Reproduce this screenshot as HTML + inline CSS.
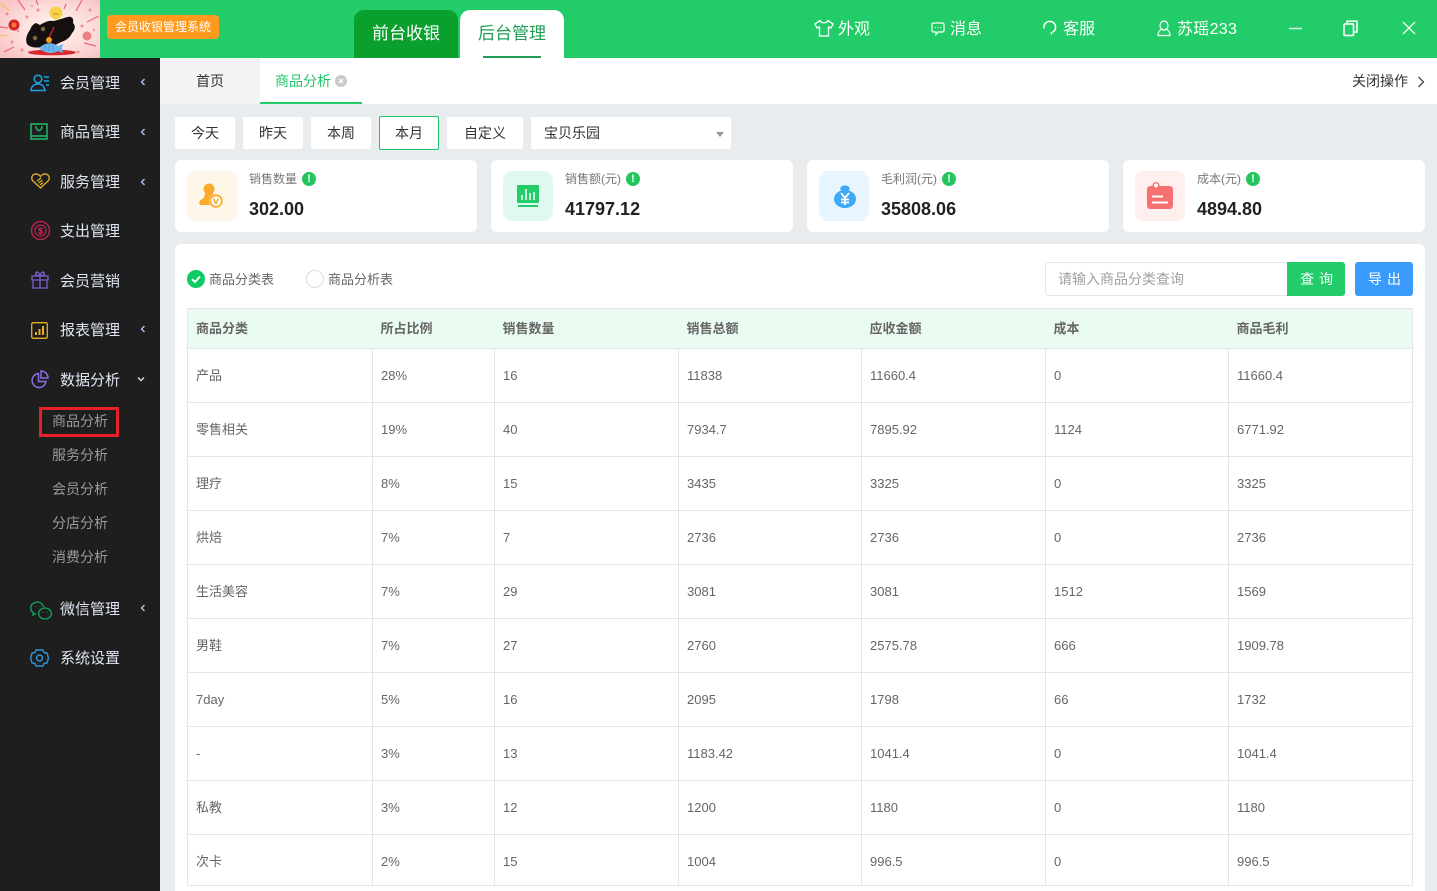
<!DOCTYPE html>
<html lang="zh"><head><meta charset="utf-8"><title>商品分析</title>
<style>
*{box-sizing:border-box;margin:0;padding:0}
html,body{width:1437px;height:891px;overflow:hidden}
body{position:relative;background:#e8ecef;font-family:"Liberation Sans","Noto Sans CJK SC",sans-serif;color:#333}
.a{position:absolute;white-space:nowrap}
svg{position:absolute;overflow:visible}
.top{left:0;top:0;width:1437px;height:58px;background:#22cc68}
.side{left:0;top:58px;width:160px;height:833px;background:#1e1e1e}
.m{left:60px;font-size:15px;line-height:22px;color:#dfe6f2}
.s{left:52px;font-size:14px;line-height:20px;color:#9a9a9a}
.c{left:139px;width:8px;height:8px}
.w{font-size:16px;line-height:22px;color:#fff}
.b{top:117px;height:32px;background:#fff;border-radius:2px;font-size:14px;line-height:32px;text-align:center;color:#333}
.card{top:160px;width:302px;height:72px;background:#fff;border-radius:6px}
.ic{left:12px;top:11px;width:50px;height:50px;border-radius:9px}
.l{left:74px;top:10px;font-size:12px;line-height:18px;color:#777}
.v{left:74px;top:37px;font-size:18px;font-weight:bold;line-height:24px;color:#222}
.ok{top:12px;width:14px;height:14px;border-radius:50%;background:#22c55e;color:#fff;font-size:11px;font-weight:bold;line-height:14px;text-align:center}
table{position:absolute;left:187px;top:308px;width:1225px;border-collapse:collapse;table-layout:fixed;font-size:13px;color:#666}
td,th{border:1px solid #e6e6e6;padding:0 8px;text-align:left;height:54px;white-space:nowrap;font-weight:normal}
th{height:40px;background:#eafbf1;font-weight:bold;font-size:13px;color:#666;padding-bottom:2px}
tr.h th{border-left:0;border-right:0}
tr.h th:first-child{border-left:1px solid #e6e6e6}
tr.h th:last-child{border-right:1px solid #e6e6e6}
tr.z td:first-child{padding-bottom:2px}
tr.last td{height:51px;padding-top:2px}
tr.last td:first-child{padding-top:0;padding-bottom:0}
</style></head><body>
<div class="a top"></div>
<svg style="left:0;top:0;overflow:hidden" width="100" height="58" viewBox="0 0 100 58">
<defs><radialGradient id="g" cx="55%" cy="50%" r="65%"><stop offset="0" stop-color="#fff4ee"/><stop offset=".6" stop-color="#fcdcda"/><stop offset="1" stop-color="#f9c4c6"/></radialGradient></defs>
<rect width="100" height="58" fill="url(#g)"/>
<g stroke="#ea6a70" stroke-width="1.200"><path d="M18 0l7 10M36 0l2 5M82 0l-6 11M99 16l-12 6M0 27l8 1M96 46l-12-3M4 52l10-5M66 4l-2 5"/></g>
<g stroke="#f0c24a" stroke-width="1"><path d="M0 3l10 8M0 36l8-1"/></g>
<g fill="#ee8f94"><circle cx="27" cy="17" r="1.500"/><circle cx="38" cy="10" r="1.500"/><circle cx="12" cy="42" r="1.500"/><circle cx="90" cy="10" r="1.500"/><circle cx="22" cy="50" r="1.500"/><circle cx="78" cy="52" r="1.500"/><circle cx="7" cy="14" r="1.500"/><circle cx="82" cy="26" r="1.500"/><circle cx="18" cy="31" r="1.200"/><circle cx="94" cy="30" r="1.200"/><circle cx="32" cy="6" r="1"/></g>
<circle cx="87" cy="36" r="4.500" fill="#ef7f83"/>
<circle cx="14" cy="25" r="5.500" fill="#d92222"/><circle cx="14" cy="25" r="2.500" fill="#f47a3c"/>
<circle cx="56" cy="21" r="8" fill="#fff" opacity=".6"/>
<circle cx="56" cy="13" r="6.500" fill="#f8d24a"/><path d="M53 14h6" stroke="#c98a1a"/>
<path d="M27 44c-2-5 0-10 3-14 1-3 3-6 6-7l4 2c5-3 9-5 13-4 6-1 10-3 15-4 4-1 6 2 5 6 3 3 2 7-1 10-2 5-7 8-11 9-5 3-10 5-17 5-7 1-14 1-17-3z" fill="#15100f"/>
<ellipse cx="52" cy="52.500" rx="24" ry="2.800" fill="#d9272e"/>
<circle cx="43" cy="29" r="2.200" fill="#7c6a3c"/><circle cx="35" cy="38" r="2.200" fill="#7c6a3c"/>
<path d="M54 27l-5 11" stroke="#c9202a" stroke-width="1.500"/>
<circle cx="49" cy="40" r="3" fill="#f39c1f"/>
<path d="M39 48c6-6 14-6 19-2l5-2-1 4 1 5-5-2c-5 3-13 3-19-3z" fill="#6cb6ee"/>
<path d="M45 46v4M49 45v6M53 45v6" stroke="#3d8fd0" stroke-width=".7"/>
</svg>
<div class="a" style="left:107px;top:15px;width:112px;height:24px;background:#ff9a1f;border-radius:4px;color:#fff;font-size:12px;line-height:24px;text-align:center">会员收银管理系统</div>
<div class="a" style="left:354px;top:10px;width:104px;height:48px;background:#0aa02d;border-radius:10px 10px 0 0;color:#fff;font-size:17px;line-height:48px;text-align:center">前台收银</div>
<div class="a" style="left:460px;top:10px;width:104px;height:48px;background:#fff;border-radius:10px 10px 0 0;color:#1f9d55;font-size:17px;line-height:48px;text-align:center">后台管理</div>
<div class="a" style="left:483px;top:56px;width:58px;height:2px;background:#1f9d55"></div>

<svg style="left:814px;top:19px" width="20" height="18" fill="none" stroke="#fff" stroke-width="1.300"><path d="M6 1.500L1 5l2 4 2.500-1v9h9V8L17 9l2-4-5-3.500c-1 3-7 3-8 0z"/></svg>
<div class="a w" style="left:838px;top:19px">外观</div>
<svg style="left:931px;top:22px" width="14" height="14" fill="none" stroke="#fff" stroke-width="1.200"><path d="M2.500 1h9A1.500 1.500 0 0 1 13 2.500v6A1.500 1.500 0 0 1 11.500 10H7l-2 2.500V10H2.500A1.500 1.500 0 0 1 1 8.500v-6A1.500 1.500 0 0 1 2.500 1z"/><path d="M4 5.500h.8M6.600 5.500h.8M9.200 5.500h.8"/></svg>
<div class="a w" style="left:950px;top:19px">消息</div>
<svg style="left:1042px;top:20px" width="16" height="16" fill="none" stroke="#fff" stroke-width="1.500"><path d="M2 8.500C1 3 6 1 9 1.500c3 .5 5 3.500 4.500 6.500-.3 2-1.500 3.500-3 4"/><path d="M9.500 12v2.500"/></svg>
<div class="a w" style="left:1063px;top:19px">客服</div>
<svg style="left:1157px;top:20px" width="14" height="16" fill="none" stroke="#fff" stroke-width="1.200"><ellipse cx="7" cy="5.500" rx="4" ry="4.500"/><path d="M4.500 9.500C2 10.500 1 12 1 15.500h12c0-3.500-1-5-3.500-6"/></svg>
<div class="a w" style="left:1177px;top:19px;letter-spacing:.3px">苏瑶233</div>
<svg style="left:1289px;top:22px" width="14" height="14" stroke="#d8f7e3" stroke-width="1.500"><path d="M0 6.500h13"/></svg>
<svg style="left:1343px;top:20px" width="16" height="17" fill="none" stroke="#e8fbef" stroke-width="1.700"><rect x="1" y="4" width="9.500" height="11.500" rx="1"/><path d="M4 3.500V1.200h10v10.800h-3.500"/></svg>
<svg style="left:1402px;top:21px" width="14" height="14" stroke="#e8fbef" stroke-width="1.400"><path d="M1 1l12 12M13 1L1 13"/></svg>

<div class="a side"></div>
<svg style="left:30px;top:74px" width="20" height="18" fill="none" stroke="#1aa5e8" stroke-width="1.500"><circle cx="8" cy="5" r="3.800"/><path d="M1 16.500c0-4 3-6.500 7-6.500s6 2 7 6.500z"/><path d="M14 3h5M14 7h5M16 11h3"/></svg>
<div class="a m" style="top:73px">会员管理</div>
<svg class="a c" style="top:78px" viewBox="0 0 8 8" fill="none" stroke="#a9c4f0" stroke-width="1.400"><path d="M5.500 1L2.500 4l3 3"/></svg>
<svg style="left:30px;top:123px" width="18" height="17" fill="none" stroke="#1fc06f" stroke-width="1.400"><path d="M1 1h16v12H1zM1 13v3h16v-3"/><path d="M6 3c0 6 6 6 6 0"/></svg>
<div class="a m" style="top:122px">商品管理</div>
<svg class="a c" style="top:128px" viewBox="0 0 8 8" fill="none" stroke="#a9c4f0" stroke-width="1.400"><path d="M5.500 1L2.500 4l3 3"/></svg>
<svg style="left:31px;top:173px" width="19" height="16" fill="none" stroke="#d9a62c" stroke-width="1.400"><path d="M9.500 15L1.500 7.500C-.5 4 2 1 5 1c2 0 3.500 1 4.500 2.500C10.500 2 12 1 14 1c3 0 5.500 3 3.500 6.500z"/><path d="M6 8l4-3M7.500 10l4-3M9 12l3-2.500"/></svg>
<div class="a m" style="top:172px">服务管理</div>
<svg class="a c" style="top:178px" viewBox="0 0 8 8" fill="none" stroke="#a9c4f0" stroke-width="1.400"><path d="M5.500 1L2.500 4l3 3"/></svg>
<svg style="left:30px;top:220px" width="21" height="21" fill="none"><circle cx="10.500" cy="10.500" r="9" stroke="#b8234f" stroke-width="1.500"/><circle cx="10.500" cy="10.500" r="5.500" stroke="#b8234f" stroke-width="1.200"/><text x="10.500" y="14" font-size="9" font-weight="bold" text-anchor="middle" fill="#e0285f">$</text></svg>
<div class="a m" style="top:221px">支出管理</div>
<svg style="left:31px;top:271px" width="18" height="18" fill="none" stroke="#7d5fd0" stroke-width="1.300"><path d="M1 5h16v4H1zM2 9h14v8H2zM9 5v12M9 5C6 5 4 3.500 5 1.500 6.500 0 8.500 2.500 9 5zM9 5c3 0 5-1.500 4-3.500C11.500 0 9.500 2.500 9 5z"/></svg>
<div class="a m" style="top:271px">会员营销</div>
<svg style="left:31px;top:322px" width="17" height="17" fill="none" stroke="#e7ad22" stroke-width="1.300"><rect x=".7" y=".7" width="15.600" height="15.600" rx="1.500"/><path d="M5 13v-3M8.500 13V7M12 13V4" stroke-width="2"/></svg>
<div class="a m" style="top:320px">报表管理</div>
<svg class="a c" style="top:325px" viewBox="0 0 8 8" fill="none" stroke="#a9c4f0" stroke-width="1.400"><path d="M5.500 1L2.500 4l3 3"/></svg>
<svg style="left:31px;top:370px" width="18" height="18" fill="none" stroke="#8a6fe0" stroke-width="1.500"><path d="M7.500 3.500a7 7 0 1 0 7.500 8H7.500z"/><path d="M10 1a7 7 0 0 1 7 7h-7z"/></svg>
<div class="a m" style="top:370px">数据分析</div>
<svg class="a c" style="left:137px;top:375px" viewBox="0 0 8 8" fill="none" stroke="#d6dce6" stroke-width="1.400"><path d="M1 2.500l3 3 3-3"/></svg>
<div class="a" style="left:39px;top:407px;width:80px;height:30px;border:3px solid #e8202a"></div>
<div class="a s" style="top:411px">商品分析</div>
<div class="a s" style="top:445px">服务分析</div>
<div class="a s" style="top:479px">会员分析</div>
<div class="a s" style="top:513px">分店分析</div>
<div class="a s" style="top:547px">消费分析</div>
<svg style="left:30px;top:601px" width="22" height="19" fill="none" stroke="#0fa958" stroke-width="1.300"><path d="M8 1C4 1 .7 3.500.7 7c0 2 1 3.500 2.500 4.500L3 14l3-1.500"/><path d="M14 6C12 2.500 10 1 8 1"/><ellipse cx="15" cy="12.500" rx="6.300" ry="5.500"/><path d="M13 11v.5M17 11v.5M5.500 5v.5M10 5v.5" stroke-width="1.500"/></svg>
<div class="a m" style="top:599px">微信管理</div>
<svg class="a c" style="top:604px" viewBox="0 0 8 8" fill="none" stroke="#a9c4f0" stroke-width="1.400"><path d="M5.500 1L2.500 4l3 3"/></svg>
<svg style="left:30px;top:649px" width="19" height="18" fill="none" stroke="#2f94d8" stroke-width="1.400"><path d="M6 1h7l1 2.500 3 .5 1.500 5-1.500 5-3 .5-1 2.500H6l-1-2.500-3-.5L.7 9 2 4l3-.5z" stroke-linejoin="round"/><circle cx="9.500" cy="9" r="3"/></svg>
<div class="a m" style="top:648px">系统设置</div>

<div class="a" style="left:160px;top:58px;width:1277px;height:46px;background:#fff"></div>
<div class="a" style="left:160px;top:58px;width:100px;height:46px;background:#f3f3f3;font-size:14px;line-height:46px;text-align:center;color:#333">首页</div>
<div class="a" style="left:275px;top:58px;font-size:14px;line-height:46px;color:#22c46a">商品分析</div>
<svg style="left:335px;top:75px" width="12" height="12"><circle cx="6" cy="6" r="6" fill="#c9c9c9"/><path d="M4 4l4 4M8 4l-4 4" stroke="#fff" stroke-width="1.300"/></svg>
<div class="a" style="left:260px;top:102px;width:102px;height:2px;background:#22cc68"></div>
<div class="a" style="left:1352px;top:70px;font-size:14px;line-height:22px;color:#333">关闭操作</div>
<svg style="left:1417px;top:76px" width="8" height="12" fill="none" stroke="#444" stroke-width="1.300"><path d="M1.500 1l5 5-5 5"/></svg>

<div class="a b" style="left:175px;width:60px">今天</div>
<div class="a b" style="left:243px;width:60px">昨天</div>
<div class="a b" style="left:311px;width:60px">本周</div>
<div class="a b" style="left:379px;top:116px;height:34px;width:60px;border:1px solid #22c46a;line-height:32px">本月</div>
<div class="a b" style="left:447px;width:76px">自定义</div>
<div class="a b" style="left:531px;width:200px;text-align:left;padding-left:13px">宝贝乐园</div>
<svg style="left:716px;top:132px" width="8" height="6"><path d="M0 0h8L4 5z" fill="#999"/></svg>

<div class="a card" style="left:175px">
<div class="a ic" style="background:#fff6ea"></div>
<svg style="left:24px;top:23px" width="26" height="26"><circle cx="10" cy="6" r="5.500" fill="#fbab2c"/><path d="M6 10h8l1 5c-2 2-3 4-2.500 7H1c-1-2-1-4 2-6 2-1 3-3 3-6z" fill="#fbab2c"/><circle cx="17" cy="18" r="7" fill="#fff"/><circle cx="17" cy="18" r="5.800" fill="none" stroke="#fbab2c" stroke-width="1.800"/><path d="M14.500 15.500l2.500 5 2.500-5" fill="none" stroke="#fbab2c" stroke-width="1.600"/></svg>
<div class="a l">销售数量</div><div class="a ok" style="left:127px">!</div><div class="a v">302.00</div></div>
<div class="a card" style="left:491px">
<div class="a ic" style="background:#e0f8ef"></div>
<svg style="left:26px;top:25px" width="24" height="24"><rect width="22" height="18" y="0" fill="#22cc68" rx="1"/><path d="M5 15v-5M9 15V4M13 15V8M17 15V7" stroke="#fff" stroke-width="1.500"/><rect x="1" y="20" width="20" height="2" fill="#22cc68"/></svg>
<div class="a l">销售额(元)</div><div class="a ok" style="left:135px">!</div><div class="a v">41797.12</div></div>
<div class="a card" style="left:807px">
<div class="a ic" style="background:#e6f5ff"></div>
<svg style="left:26px;top:24px" width="24" height="24"><path d="M8 3c1-2 7-2 8 0l1 2-2 2h-6L7 5z" fill="#3fa9f5"/><ellipse cx="12" cy="15" rx="11" ry="9" fill="#3fa9f5"/><path d="M8 9l4 5 4-5M12 14v7M8 15.500h8M8 18.500h8" fill="none" stroke="#fff" stroke-width="1.800"/></svg>
<div class="a l">毛利润(元)</div><div class="a ok" style="left:135px">!</div><div class="a v">35808.06</div></div>
<div class="a card" style="left:1123px">
<div class="a ic" style="background:#ffefef"></div>
<svg style="left:24px;top:22px" width="28" height="28"><rect x="0" y="4" width="26" height="23" rx="3" fill="#f87171"/><circle cx="9" cy="3.500" r="2.800" fill="#fff" stroke="#f87171" stroke-width="1.500"/><path d="M5 14.500h11M5 20.500h16" stroke="#fff" stroke-width="2"/></svg>
<div class="a l">成本(元)</div><div class="a ok" style="left:123px">!</div><div class="a v">4894.80</div></div>

<div class="a" style="left:175px;top:244px;width:1250px;height:660px;background:#fff;border-radius:6px"></div>
<svg style="left:187px;top:270px" width="18" height="18"><circle cx="9" cy="9" r="9" fill="#0ccb62"/><path d="M5 9.200l3 2.800 5-5.500" fill="none" stroke="#fff" stroke-width="2"/></svg>
<div class="a" style="left:209px;top:270px;font-size:13px;line-height:20px;color:#666">商品分类表</div>
<svg style="left:306px;top:270px" width="18" height="18"><circle cx="9" cy="9" r="8.500" fill="#fff" stroke="#ddd"/></svg>
<div class="a" style="left:328px;top:270px;font-size:13px;line-height:20px;color:#666">商品分析表</div>
<div class="a" style="left:1045px;top:262px;width:243px;height:34px;background:#fff;border:1px solid #e3e6e8;border-radius:3px 0 0 3px;padding-left:12px;font-size:14px;line-height:32px;color:#a0a0a0">请输入商品分类查询</div>
<div class="a" style="left:1287px;top:262px;width:58px;height:34px;background:#22cc68;border-radius:0 3px 3px 0;color:#fff;font-size:14px;line-height:34px;text-align:center;letter-spacing:5px;padding-left:6px">查询</div>
<div class="a" style="left:1355px;top:262px;width:58px;height:34px;background:#3a9bfc;border-radius:3px;color:#fff;font-size:14px;line-height:34px;text-align:center;letter-spacing:5px;padding-left:6px">导出</div>

<table><colgroup><col style="width:185px"><col style="width:122px"><col style="width:184px"><col style="width:183px"><col style="width:184px"><col style="width:183px"><col style="width:184px"></colgroup>
<tr class="h"><th>商品分类</th><th>所占比例</th><th>销售数量</th><th>销售总额</th><th>应收金额</th><th>成本</th><th>商品毛利</th></tr>
<tr class="z"><td>产品</td><td>28%</td><td>16</td><td>11838</td><td>11660.4</td><td>0</td><td>11660.4</td></tr>
<tr class="z"><td>零售相关</td><td>19%</td><td>40</td><td>7934.7</td><td>7895.92</td><td>1124</td><td>6771.92</td></tr>
<tr class="z"><td>理疗</td><td>8%</td><td>15</td><td>3435</td><td>3325</td><td>0</td><td>3325</td></tr>
<tr class="z"><td>烘焙</td><td>7%</td><td>7</td><td>2736</td><td>2736</td><td>0</td><td>2736</td></tr>
<tr class="z"><td>生活美容</td><td>7%</td><td>29</td><td>3081</td><td>3081</td><td>1512</td><td>1569</td></tr>
<tr class="z"><td>男鞋</td><td>7%</td><td>27</td><td>2760</td><td>2575.78</td><td>666</td><td>1909.78</td></tr>
<tr><td>7day</td><td>5%</td><td>16</td><td>2095</td><td>1798</td><td>66</td><td>1732</td></tr>
<tr><td>-</td><td>3%</td><td>13</td><td>1183.42</td><td>1041.4</td><td>0</td><td>1041.4</td></tr>
<tr class="z"><td>私教</td><td>3%</td><td>12</td><td>1200</td><td>1180</td><td>0</td><td>1180</td></tr>
<tr class="last"><td>次卡</td><td>2%</td><td>15</td><td>1004</td><td>996.5</td><td>0</td><td>996.5</td></tr>
</table>
</body></html>
